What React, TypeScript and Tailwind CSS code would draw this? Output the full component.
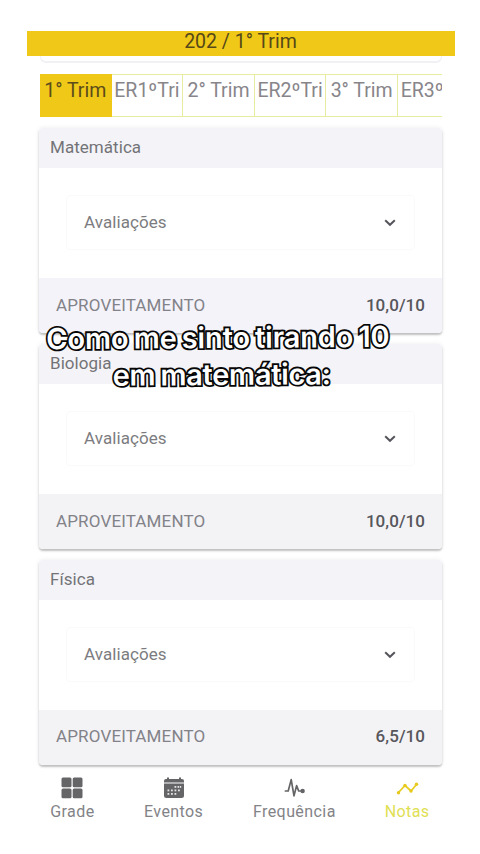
import React from "react";

const tabs = ["1° Trim", "ER1ºTri", "2° Trim", "ER2ºTri", "3° Trim", "ER3ºTri"];

const subjects = [
  { name: "Matemática", score: "10,0/10", tint: "bg-[#f4f3fa]" },
  { name: "Biologia", score: "10,0/10", tint: "bg-[#f3f3f6]" },
  { name: "Física", score: "6,5/10", tint: "bg-[#f3f3f6]" },
];

function Chevron() {
  return (
    <svg width="12" height="8" viewBox="0 0 12 8" fill="none" stroke="#55555b" strokeWidth="2">
      <path d="M1.2 1.2 6 5.8l4.8-4.6" />
    </svg>
  );
}

function SubjectCard({ name, score, tint }: { name: string; score: string; tint: string }) {
  return (
    <section className="h-[205px] shrink-0 overflow-hidden rounded-[4px] bg-white shadow-[0_2px_2px_rgba(0,0,0,0.22),0_0_4px_rgba(60,60,90,0.1)]">
      <h2 className="h-[40px] bg-[#f4f4f8] pl-[11px] text-[17px] leading-[39px] tracking-[0.05px] text-[#737377]">{name}</h2>
      <div className="h-[110px] px-[27px] pt-[27px]">
        <div className="flex h-[55px] items-center justify-between rounded-sm border border-[#fafafd] pl-[17px] pr-[18px] pt-px">
          <span className="text-[17px] tracking-[0.08px] text-[#7c7c80]">Avaliações</span>
          <Chevron />
        </div>
      </div>
      <div className={`flex h-[55px] items-center justify-between pl-[17px] pr-[17px] ${tint}`}>
        <span className="text-[17px] tracking-[0.15px] text-[#828288]">APROVEITAMENTO</span>
        <span className="text-[17px] font-medium tracking-[0.05px] text-[#57575c]">{score}</span>
      </div>
    </section>
  );
}

function GridIcon() {
  return (
    <svg width="22" height="22" viewBox="0 0 22 22" fill="#656568">
      <rect x="0.5" y="0.5" width="10" height="9.7" rx="1.5" />
      <rect x="11.7" y="0.5" width="9.8" height="9.7" rx="1.5" />
      <rect x="0.5" y="11.5" width="10" height="9.7" rx="1.5" />
      <rect x="11.7" y="11.5" width="9.8" height="9.7" rx="1.5" />
    </svg>
  );
}

function CalendarIcon() {
  return (
    <svg width="22" height="22" viewBox="0 0 22 22">
      <path d="M3 2h1V.5h2V2h10V.5h2V2h1q2 0 2 2v1.4H1V4q0-2 2-2Z" fill="#656568" />
      <path d="M1 6.6h20v11.9q0 2.5-2.5 2.5h-15Q1 21 1 18.5Z" fill="#656568" />
      <g fill="#e4e4e6">
        <rect x="11.5" y="9" width="1.8" height="1.8" />
        <rect x="14.5" y="9" width="1.8" height="1.8" />
        <rect x="17" y="9" width="1.2" height="1.8" />
        <rect x="4.5" y="12.5" width="1.8" height="1.8" />
        <rect x="8" y="12.5" width="1.8" height="1.8" />
        <rect x="11.5" y="12.5" width="1.8" height="1.8" />
        <rect x="15" y="12.5" width="1.8" height="1.8" />
        <rect x="4.5" y="16" width="1.8" height="1.8" />
        <rect x="8" y="16" width="1.8" height="1.8" />
        <rect x="11.5" y="16" width="1.8" height="1.8" />
      </g>
    </svg>
  );
}

function PulseIcon() {
  return (
    <svg width="22" height="22" viewBox="0 0 22 22" fill="none" stroke="#656568" strokeWidth="1.7" strokeLinejoin="round" strokeLinecap="round">
      <path d="M2.4 14h2.8L8.2 2.6l2.8 16.2L13.6 8.6l2.1 5.4H19.6" />
      <circle cx="19.6" cy="14" r="1.4" fill="#656568" />
    </svg>
  );
}

function TrendIcon() {
  return (
    <svg width="24" height="22" viewBox="0 0 24 22" fill="none" stroke="#e7cd24" strokeWidth="1.8">
      <path d="m3.5 15.5 6.5-7 6 5.5L21.5 7.5" />
      <g fill="#e7c81c" stroke="none">
        <circle cx="3.5" cy="15.7" r="1.7" />
        <circle cx="10" cy="8.5" r="1.7" />
        <circle cx="16" cy="14" r="1.7" />
        <circle cx="21.5" cy="7.2" r="1.7" />
      </g>
    </svg>
  );
}

function NavItem({ icon, label, active = false, box }: { icon: React.ReactNode; label: string; active?: boolean; box: string }) {
  return (
    <a className={`flex flex-col items-center pt-[9px] ${box}`}>
      {icon}
      <span className={`mt-[3px] text-[16px] leading-[20px] tracking-[0.42px] ${active ? "text-[#dfe052]" : "text-[#838387]"}`}>{label}</span>
    </a>
  );
}

export default function App() {
  return (
    <main className="relative h-[854px] w-[480px] overflow-hidden bg-white font-[Roboto,sans-serif]">
      <div className="ml-[27px] w-[428px] pt-[31px]">
        <header className="h-[25px] bg-[#f0c817] pr-px text-center text-[19.5px] leading-[22px] text-[#564817]">202 / 1° Trim</header>
        <div className="ml-[13px] h-[7px] w-[402px] rounded-b-[6px] border-x border-b-2 border-[#f1f1f5]" />
        <nav className="ml-[13px] mt-[11px] flex h-[43px] w-[402px] overflow-hidden">
          {tabs.map((tab, i) => (
            <button
              key={tab}
              className={`h-[43px] w-[71.6px] shrink-0 whitespace-nowrap border-y border-r pb-[9px] text-[19.5px] leading-[20px] ${
                i === 0 ? "border-[#f0c817] bg-[#f0c817] text-[#5b4c1b]" : "border-[#e8eca0] text-[#87858a]"
              }`}
            >
              {tab}
            </button>
          ))}
        </nav>
      </div>
      <div className="ml-[39px] mt-[11px] flex h-[640px] w-[403px] flex-col gap-[10.8px]">
        {subjects.map((subject) => (
          <SubjectCard key={subject.name} {...subject} />
        ))}
      </div>
      <footer className="ml-[27px] flex h-[86px] w-[428px] bg-white">
        <NavItem icon={<GridIcon />} label="Grade" box="w-[91px]" />
        <NavItem icon={<CalendarIcon />} label="Eventos" box="w-[112px]" />
        <NavItem icon={<PulseIcon />} label="Frequência" box="w-[130px]" />
        <NavItem icon={<TrendIcon />} label="Notas" active box="w-[96px]" />
      </footer>
      <div className="absolute left-[42px] top-[318.5px] flex w-[352px] -rotate-[0.4deg] flex-col items-center whitespace-nowrap font-[Inter,sans-serif] text-[29px] font-semibold leading-[37px] text-white [-webkit-text-stroke:3.6px_#080808] [paint-order:stroke_fill] [text-shadow:0_0_2px_rgba(0,0,0,0.5)] [word-spacing:-2px]">
        <span className="tracking-[-0.15px]">Como me sinto tirando 10</span>
        <span className="ml-[7px] tracking-[-0.3px]">em matemática:</span>
      </div>
    </main>
  );
}
